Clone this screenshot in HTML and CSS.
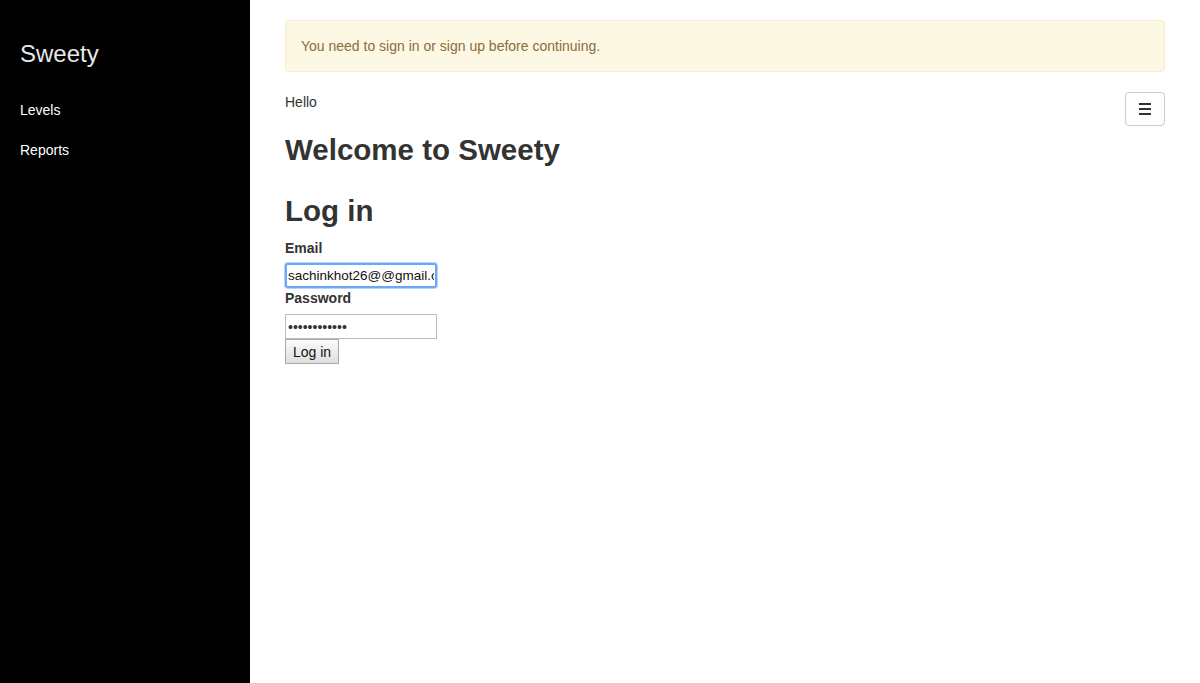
FILE: index.html
```html
<!DOCTYPE html>
<html lang="en">
<head>
<meta charset="utf-8">
<title>Sweety</title>
<link rel="stylesheet" href="styles.css">
</head>
<body>
<div class="layout">
  <aside class="sidebar">
    <div class="brand">Sweety</div>
    <nav class="side-nav">
      <a class="side-link" href="#">Levels</a>
      <a class="side-link" href="#">Reports</a>
    </nav>
  </aside>
  <main class="content">
    <div class="alert">You need to sign in or sign up before continuing.</div>
    <div class="top-row">
      <p class="hello">Hello</p>
      <button class="menu-btn" type="button" aria-label="Menu">
        <svg width="12" height="12" viewBox="0 0 12 12" aria-hidden="true">
          <rect x="0" y="0" width="12" height="2" fill="#333"/>
          <rect x="0" y="5" width="12" height="2" fill="#333"/>
          <rect x="0" y="10" width="12" height="2" fill="#333"/>
        </svg>
      </button>
    </div>
    <h2 class="welcome">Welcome to Sweety</h2>
    <h2 class="login-title">Log in</h2>
    <form class="login-form">
      <label class="field-label" for="email">Email</label>
      <input class="field-input focused" id="email" type="text" value="sachinkhot26@@gmail.com">
      <label class="field-label pw-label" for="password">Password</label>
      <input class="field-input pw-input" id="password" type="password" value="abcdefghijkl">
      <button class="submit-btn" type="button">Log in</button>
    </form>
  </main>
</div>
</body>
</html>
```
FILE: styles.css
```css
* { box-sizing: border-box; }
html, body { margin: 0; padding: 0; }
body {
  font-family: "Liberation Sans", Arial, sans-serif;
  font-size: 14px;
  line-height: 20px;
  color: #333;
  background: #fff;
}
.layout {
  display: flex;
  min-height: 683px;
}
.sidebar {
  width: 250px;
  flex: 0 0 250px;
  background: #000;
  padding: 0 20px;
}
.brand {
  margin-top: 41px;
  font-size: 24px;
  line-height: 26px;
  color: #e8e8e8;
}
.side-nav {
  display: flex;
  flex-direction: column;
  margin-top: 23px;
}
.side-link {
  display: block;
  padding: 10px 0;
  color: #fff;
  text-decoration: none;
  font-size: 14px;
  line-height: 20px;
}
.content {
  flex: 1;
  padding: 20px 35px 0 35px;
}
.alert {
  background: #fcf8e3;
  border: 1px solid #faebcc;
  color: #8a6d3b;
  border-radius: 4px;
  padding: 15px;
  margin-bottom: 20px;
  line-height: 20px;
}
.top-row {
  display: flex;
  justify-content: space-between;
  align-items: flex-start;
}
.hello { margin: 0; }
.menu-btn {
  width: 40px;
  height: 34px;
  border: 1px solid #ccc;
  border-radius: 4px;
  background: #fff;
  display: flex;
  align-items: center;
  justify-content: center;
  padding: 0;
}
.welcome, .login-title {
  font-size: 29.5px;
  line-height: 33px;
  font-weight: 700;
  margin: 0;
  color: #333;
}
.welcome { margin-top: 7px; }
.login-title { margin-top: 28px; margin-bottom: 11px; }
.login-form {
  display: flex;
  flex-direction: column;
  align-items: flex-start;
}
.field-label {
  font-weight: 700;
  line-height: 20px;
  margin-bottom: 5px;
}
.pw-label { margin-bottom: 6px; }
.field-input {
  width: 152px;
  height: 25px;
  border: 1px solid #bdbdbd;
  padding: 0 2px;
  font-family: "Liberation Sans", Arial, sans-serif;
  font-size: 13.5px;
  color: #111;
  background: #fff;
  margin: 0;
}
.pw-input {
  font-size: 14px;
  color: #333;
}
.field-input.focused {
  border: 2px solid #6fa8f2;
  border-radius: 3px;
  box-shadow: 0 0 0 1px #b5d3f8;
  padding: 0 1px;
  outline: none;
}
.submit-btn {
  height: 25px;
  padding: 0 7px;
  border: 1px solid #a9a9a9;
  background: linear-gradient(#fbfbfb, #dedede);
  font-family: "Liberation Sans", Arial, sans-serif;
  font-size: 14px;
  color: #111;
  margin: 0;
}
```
